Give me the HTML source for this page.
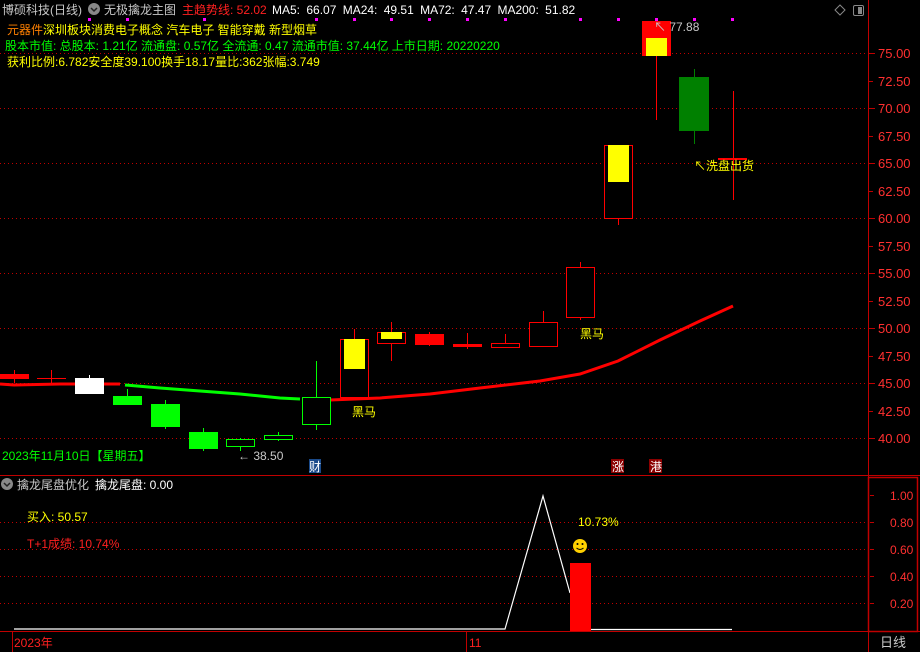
<!DOCTYPE html>
<html><head><meta charset="utf-8"><style>
html,body{margin:0;padding:0;background:#000;width:920px;height:652px;overflow:hidden}
svg{display:block}
text{font-family:"Liberation Sans","Noto Sans CJK SC",sans-serif;font-size:12px}
</style></head><body>
<svg width="920" height="652" viewBox="0 0 920 652" xmlns="http://www.w3.org/2000/svg">
<rect width="920" height="652" fill="#000"/>
<g stroke="#c00000" stroke-dasharray="1,3" stroke-width="1">
<line x1="0" y1="53.5" x2="868" y2="53.5"/><line x1="0" y1="108.5" x2="868" y2="108.5"/>
<line x1="0" y1="163.5" x2="868" y2="163.5"/><line x1="0" y1="218.5" x2="868" y2="218.5"/>
<line x1="0" y1="273.5" x2="868" y2="273.5"/><line x1="0" y1="328.5" x2="868" y2="328.5"/>
<line x1="0" y1="383.5" x2="868" y2="383.5"/><line x1="0" y1="438.5" x2="868" y2="438.5"/>
<line x1="0" y1="522.5" x2="868" y2="522.5"/><line x1="0" y1="549.5" x2="868" y2="549.5"/>
<line x1="0" y1="576.5" x2="868" y2="576.5"/><line x1="0" y1="603.5" x2="868" y2="603.5"/>
</g>
<line x1="868.5" y1="0" x2="868.5" y2="652" stroke="#c00000"/>
<line x1="0" y1="475.5" x2="920" y2="475.5" stroke="#c00000"/>
<line x1="0" y1="631.5" x2="920" y2="631.5" stroke="#c00000"/>
<rect x="868.5" y="477.5" width="49" height="154" fill="none" stroke="#c00000" stroke-width="1.5"/>
<line x1="466.5" y1="632" x2="466.5" y2="652" stroke="#c00000"/>
<line x1="12.5" y1="632" x2="12.5" y2="652" stroke="#c00000"/>
<g stroke="#c00000">
<line x1="869" y1="53.5" x2="875" y2="53.5"/><line x1="869" y1="81.5" x2="873" y2="81.5"/><line x1="869" y1="108.5" x2="875" y2="108.5"/><line x1="869" y1="136.5" x2="873" y2="136.5"/><line x1="869" y1="163.5" x2="875" y2="163.5"/><line x1="869" y1="191.5" x2="873" y2="191.5"/><line x1="869" y1="218.5" x2="875" y2="218.5"/><line x1="869" y1="246.5" x2="873" y2="246.5"/><line x1="869" y1="273.5" x2="875" y2="273.5"/><line x1="869" y1="301.5" x2="873" y2="301.5"/><line x1="869" y1="328.5" x2="875" y2="328.5"/><line x1="869" y1="356.5" x2="873" y2="356.5"/><line x1="869" y1="383.5" x2="875" y2="383.5"/><line x1="869" y1="411.5" x2="873" y2="411.5"/><line x1="869" y1="438.5" x2="875" y2="438.5"/>
<line x1="870" y1="495.5" x2="874" y2="495.5"/><line x1="870" y1="522.5" x2="874" y2="522.5"/><line x1="870" y1="549.5" x2="874" y2="549.5"/><line x1="870" y1="576.5" x2="874" y2="576.5"/><line x1="870" y1="603.5" x2="874" y2="603.5"/>
</g>
<g fill="#ff3030">
<text x="878" y="58" style="font-size:13px">75.00</text><text x="878" y="86" style="font-size:13px">72.50</text><text x="878" y="113" style="font-size:13px">70.00</text><text x="878" y="141" style="font-size:13px">67.50</text><text x="878" y="168" style="font-size:13px">65.00</text><text x="878" y="196" style="font-size:13px">62.50</text><text x="878" y="223" style="font-size:13px">60.00</text><text x="878" y="251" style="font-size:13px">57.50</text><text x="878" y="278" style="font-size:13px">55.00</text><text x="878" y="306" style="font-size:13px">52.50</text><text x="878" y="333" style="font-size:13px">50.00</text><text x="878" y="361" style="font-size:13px">47.50</text><text x="878" y="388" style="font-size:13px">45.00</text><text x="878" y="416" style="font-size:13px">42.50</text><text x="878" y="443" style="font-size:13px">40.00</text>
<text x="890" y="500">1.00</text><text x="890" y="527">0.80</text><text x="890" y="554">0.60</text><text x="890" y="581">0.40</text><text x="890" y="608">0.20</text>
</g>
<polyline points="0,384 14,385 60,384 120,384" fill="none" stroke="#ff0000" stroke-width="3"/>
<polyline points="125,385 160,388 200,391 240,394 280,398 300,399" fill="none" stroke="#00ff00" stroke-width="3"/>
<polyline points="330,400 380,398 430,394 480,388 540,381 580,374 618,361 660,340 700,321 733,306" fill="none" stroke="#ff0000" stroke-width="3"/>
<g stroke-width="1">
<line x1="14.5" y1="370" x2="14.5" y2="383" stroke="#f00"/><rect x="0" y="374" width="29" height="5" fill="#f00"/>
<line x1="51.5" y1="370" x2="51.5" y2="384" stroke="#f00"/><line x1="37" y1="378.5" x2="66" y2="378.5" stroke="#f00"/>
<line x1="89.5" y1="375" x2="89.5" y2="378" stroke="#fff"/><rect x="75" y="378" width="29" height="16" fill="#fff"/>
<line x1="127.5" y1="389" x2="127.5" y2="396" stroke="#0f0"/><rect x="113" y="396" width="29" height="9" fill="#0f0"/>
<line x1="165.5" y1="400" x2="165.5" y2="429" stroke="#0f0"/><rect x="151" y="404" width="29" height="23" fill="#0f0"/>
<line x1="203.5" y1="428" x2="203.5" y2="451" stroke="#0f0"/><rect x="189" y="432" width="29" height="17" fill="#0f0"/>
<line x1="240.5" y1="438" x2="240.5" y2="451" stroke="#0f0"/><rect x="226.5" y="439.5" width="28" height="7" fill="#000" stroke="#0f0"/>
<line x1="278.5" y1="432" x2="278.5" y2="441" stroke="#0f0"/><rect x="264.5" y="435.5" width="28" height="4" fill="#000" stroke="#0f0"/>
<line x1="316.5" y1="361" x2="316.5" y2="430" stroke="#0f0"/><rect x="302.5" y="397.5" width="28" height="27" fill="#000" stroke="#0f0"/>
<line x1="354.5" y1="329" x2="354.5" y2="400" stroke="#f00"/><rect x="340.5" y="339.5" width="28" height="58" fill="#000" stroke="#f00"/><rect x="344" y="339" width="21" height="30" fill="#ff0"/>
<line x1="391.5" y1="322" x2="391.5" y2="361" stroke="#f00"/><rect x="377.5" y="332.5" width="28" height="11" fill="#000" stroke="#f00"/><rect x="381" y="332" width="21" height="7" fill="#ff0"/>
<line x1="429.5" y1="332" x2="429.5" y2="346" stroke="#f00"/><rect x="415" y="334" width="29" height="11" fill="#f00"/>
<line x1="467.5" y1="333" x2="467.5" y2="349" stroke="#f00"/><rect x="453" y="344" width="29" height="3" fill="#f00"/>
<line x1="505.5" y1="334" x2="505.5" y2="343" stroke="#f00"/><rect x="491.5" y="343.5" width="28" height="4" fill="#000" stroke="#f00"/>
<line x1="543.5" y1="311" x2="543.5" y2="322" stroke="#f00"/><rect x="529.5" y="322.5" width="28" height="24" fill="#000" stroke="#f00"/>
<line x1="580.5" y1="262" x2="580.5" y2="320" stroke="#f00"/><rect x="566.5" y="267.5" width="28" height="50" fill="#000" stroke="#f00"/>
<line x1="618.5" y1="145" x2="618.5" y2="225" stroke="#f00"/><rect x="604.5" y="145.5" width="28" height="73" fill="#000" stroke="#f00"/><rect x="608" y="145" width="21" height="37" fill="#ff0"/>
<line x1="656.5" y1="21" x2="656.5" y2="120" stroke="#f00"/><rect x="642" y="21" width="29" height="35" fill="#f00"/><rect x="646" y="38" width="21" height="18" fill="#ff0"/>
<line x1="694.5" y1="69" x2="694.5" y2="144" stroke="#008000"/><rect x="679" y="77" width="30" height="54" fill="#008000"/>
<line x1="733.5" y1="91" x2="733.5" y2="200" stroke="#f00"/><rect x="718" y="158" width="29" height="2" fill="#f00"/>
</g>
<g fill="#ff00ff">
<rect x="88" y="18" width="3" height="3"/><rect x="126" y="18" width="3" height="3"/><rect x="203" y="18" width="3" height="3"/><rect x="315" y="18" width="3" height="3"/><rect x="353" y="18" width="3" height="3"/><rect x="390" y="18" width="3" height="3"/><rect x="428" y="18" width="3" height="3"/><rect x="466" y="18" width="3" height="3"/><rect x="504" y="18" width="3" height="3"/><rect x="579" y="18" width="3" height="3"/><rect x="617" y="18" width="3" height="3"/><rect x="655" y="18" width="3" height="3"/><rect x="693" y="18" width="3" height="3"/><rect x="731" y="18" width="3" height="3"/>
</g>
<text x="2" y="14" fill="#c8c8c8">博硕科技(日线)</text>
<circle cx="94" cy="9" r="6" fill="#888"/><path d="M91 8 L94 11 L97 8" stroke="#222" stroke-width="1.5" fill="none"/>
<text x="104" y="14" fill="#c8c8c8">无极擒龙主图</text>
<text x="182" y="14" fill="#ff2020">主趋势线: 52.02</text>
<text x="272" y="14" fill="#fff" style="word-spacing:3px">MA5: 66.07  MA24: 49.51  MA72: 47.47  MA200: 51.82</text>
<text x="7" y="34" fill="#ff8000">元器件<tspan fill="#ffff00">深圳板块消费电子概念 汽车电子 智能穿戴 新型烟草</tspan></text>
<text x="5" y="50" fill="#00ff00">股本市值: 总股本: 1.21亿 流通盘: 0.57亿 全流通: 0.47 流通市值: 37.44亿 上市日期: 20220220</text>
<text x="7" y="66" fill="#ffff00">获利比例:6.782安全度39.100换手18.17量比:362张幅:3.749</text>
<path d="M840 5 L845 10 L840 15 L835 10 Z" fill="none" stroke="#888"/>
<rect x="853.5" y="5.5" width="10" height="10" rx="1.5" fill="none" stroke="#888"/><rect x="858" y="7" width="4" height="7" fill="#888"/>
<text x="654" y="31" fill="#c8c8c8">↖ 77.88</text>
<text x="352" y="416" fill="#ffff00">黑马</text>
<text x="580" y="338" fill="#ffff00">黑马</text>
<text x="694" y="170" fill="#ffff00">↖洗盘出货</text>
<text x="238" y="460" fill="#c8c8c8">← 38.50</text>
<text x="2" y="460" fill="#00ff00">2023年11月10日【星期五】</text>
<rect x="309" y="459" width="12" height="14" fill="#1a4a8a"/><text x="309" y="471" fill="#fff">财</text>
<rect x="611" y="459" width="13" height="14" fill="#8b0000"/><text x="612" y="471" fill="#fff">涨</text>
<rect x="649" y="459" width="13" height="14" fill="#8b0000"/><text x="650" y="471" fill="#fff">港</text>
<circle cx="7" cy="484" r="6" fill="#888"/><path d="M4 483 L7 486 L10 483" stroke="#222" stroke-width="1.5" fill="none"/>
<text x="17" y="489" fill="#c8c8c8">擒龙尾盘优化</text><text x="95" y="489" fill="#fff">擒龙尾盘: 0.00</text>
<text x="27" y="521" fill="#ffff00">买入: 50.57</text>
<text x="27" y="548" fill="#ff2020">T+1成绩:  10.74%</text>
<text x="578" y="526" fill="#ffff00">10.73%</text>
<circle cx="580" cy="546" r="7" fill="#ffd000"/><circle cx="577.5" cy="544" r="1" fill="#000"/><circle cx="582.5" cy="544" r="1" fill="#000"/><path d="M576.5 548 Q580 551 583.5 548" stroke="#000" fill="none"/>
<polyline points="14,629 505,629 543,496 570,593" fill="none" stroke="#fff" stroke-width="1.2"/>
<line x1="590" y1="629.5" x2="732" y2="629.5" stroke="#fff" stroke-width="1.2"/>
<rect x="570" y="563" width="21" height="68" fill="#ff0000"/>
<text x="14" y="647" fill="#ff2020">2023年</text>
<text x="469" y="647" fill="#ff2020">11</text>
<text x="880" y="647" fill="#c8c8c8" style="font-size:13px">日线</text>
</svg>
</body></html>
